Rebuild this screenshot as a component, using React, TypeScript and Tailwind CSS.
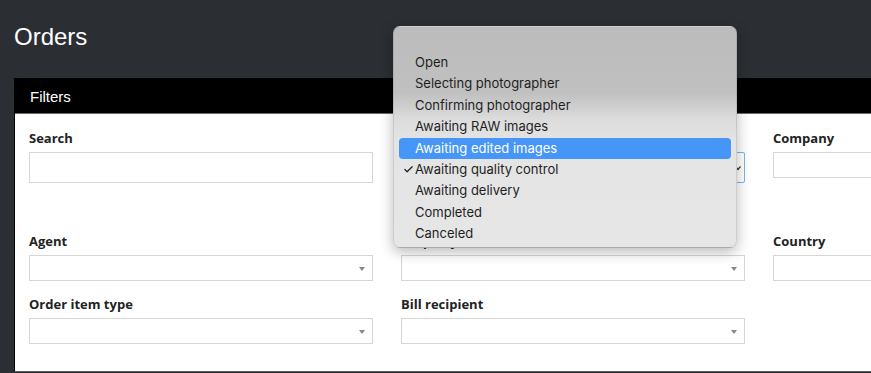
import { Check } from "lucide-react";

const STATUSES = [
  "Open",
  "Selecting photographer",
  "Confirming photographer",
  "Awaiting RAW images",
  "Awaiting edited images",
  "Awaiting quality control",
  "Awaiting delivery",
  "Completed",
  "Canceled",
];

const HIGHLIGHTED = "Awaiting edited images";
const CHECKED = "Awaiting quality control";

function Label({ children }: { children: React.ReactNode }) {
  return (
    <label className="block mb-[5px] text-[13px] leading-[18px] font-bold text-[#222] font-['Open_Sans',sans-serif]">
      {children}
    </label>
  );
}

function TextInput({ tall }: { tall?: boolean }) {
  return (
    <div
      className={`w-full bg-white border border-[#d6d6d6] ${tall ? "h-[31px]" : "h-[26px]"}`}
    />
  );
}

function Select() {
  return (
    <div className="relative w-full h-[26px] bg-white border border-[#d6d6d6]">
      {/* small grey caret */}
      <div className="absolute right-[7px] top-[11px] w-0 h-0 border-l-[3px] border-r-[3px] border-t-[4px] border-l-transparent border-r-transparent border-t-[#888]" />
    </div>
  );
}

function StatusSelect() {
  return (
    <div className="relative w-full h-[31px] bg-white border border-[#7fb3e3] rounded-[2px]">
      <svg
        className="absolute right-[3px] top-[12px]"
        width="6"
        height="6"
        viewBox="0 0 6 6"
      >
        <path d="M0.5 1.5 L3 4.5 L5.5 1.5" stroke="#333" strokeWidth="1.2" fill="none" />
      </svg>
    </div>
  );
}

function StatusMenu() {
  return (
    <div className="absolute left-[393px] top-[26px] w-[344px] h-[222px] rounded-[7px] border border-black/10 shadow-[0_4px_14px_rgba(0,0,0,0.28)] bg-[linear-gradient(to_bottom,#bcbcbc_0%,#c0c0c0_30%,#dcdcdc_42%,#e4e4e4_52%,#e6e6e6_100%)] pt-[25px] px-[5px] font-['Inter',sans-serif] text-[13px]">
      {STATUSES.map((s) => {
        const hl = s === HIGHLIGHTED;
        return (
          <div
            key={s}
            className={`relative h-[21.4px] flex items-center pl-[16px] rounded-[4px] ${
              hl ? "bg-[#4596f7] text-white" : "text-[#1e1e1e]"
            }`}
          >
            {s === CHECKED && (
              <Check size={11} strokeWidth={2.6} className="absolute left-[4px] top-[5px]" />
            )}
            {s}
          </div>
        );
      })}
    </div>
  );
}

export default function App() {
  return (
    <div className="relative w-[871px] h-[373px] overflow-hidden bg-[#2b2e33] font-['Liberation_Sans',Arial,sans-serif]">
      <h1 className="pl-[14px] pt-[22px] text-[24px] leading-[30px] text-white">Orders</h1>

      {/* Filters panel */}
      <div className="mt-[26px] ml-[14px] w-[1120px] border-l border-b border-l-black border-b-[#5a5a5a] bg-white">
        <div className="h-[36px] bg-black border-b border-[#6a6a6a] flex items-center pl-[15px] pt-[3px] text-[15px] text-white">
          Filters
        </div>

        <div className="pt-[15px] pl-[14px] pb-[27px] grid grid-cols-[344px_344px_344px] gap-x-[28px]">
          {/* row 1 */}
          <div>
            <Label>Search</Label>
            <TextInput tall />
          </div>
          <div>
            <Label>Status</Label>
            <StatusSelect />
          </div>
          <div>
            <Label>Company</Label>
            <TextInput />
          </div>

          {/* row 2 */}
          <div className="mt-[49px]">
            <Label>Agent</Label>
            <Select />
          </div>
          <div className="mt-[49px]">
            <Label>Property</Label>
            <Select />
          </div>
          <div className="mt-[49px]">
            <Label>Country</Label>
            <TextInput />
          </div>

          {/* row 3 */}
          <div className="mt-[14px]">
            <Label>Order item type</Label>
            <Select />
          </div>
          <div className="mt-[14px]">
            <Label>Bill recipient</Label>
            <Select />
          </div>
          <div />
        </div>
      </div>

      <StatusMenu />
    </div>
  );
}
